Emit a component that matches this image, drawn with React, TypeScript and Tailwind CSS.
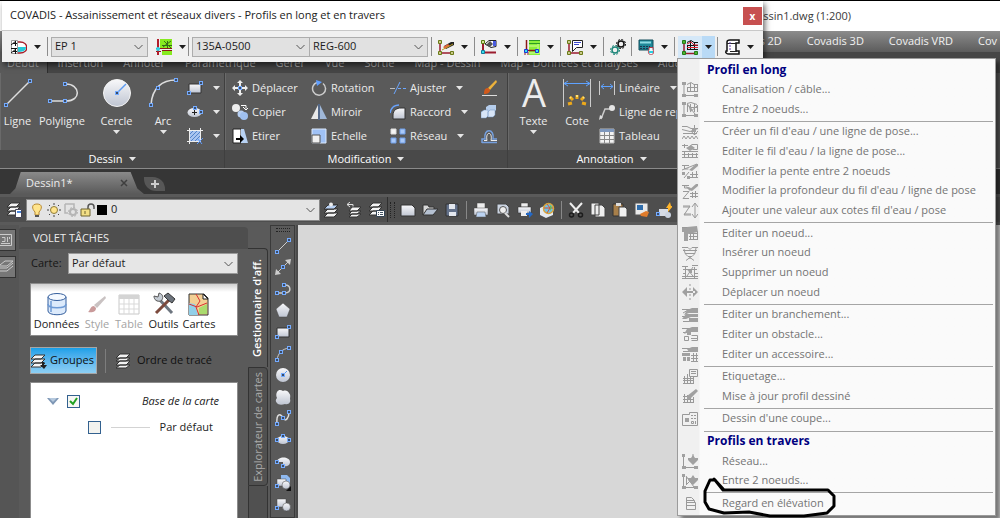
import type { ReactNode } from "react";

type MenuEntry =
  | { kind: "title"; label: string }
  | { kind: "separator" }
  | { kind: "item"; label: string; lines: string; solid?: string };

const RIBBON_TABS = ["Début", "Insertion", "Annoter", "Paramétrique", "Gérer", "Vue", "Sortie", "Map - Dessin", "Map - Données et analyses", "Aide"];

const MENU: MenuEntry[] = [
  { kind: "title", label: "Profil en long" },
  { kind: "item", label: "Canalisation / câble...", lines: "M2 2v12M2 14.500h12M5 3.500l4-2 3 2h4M5.500 6.500h10M5.500 10.500h10M5.500 6v5M8.500 2v9M12.500 3v8M15.500 4v7", solid: "M0 1h4v3h-4zM0 13h4v3h-4zM12 13h4v3h-4z" },
  { kind: "item", label: "Entre 2 noeuds...", lines: "M2 2v12M2 14.500h12M5 2.500l4-1 6 2M7 6.500h9M5 3l8 10M8.500 3v7M12.500 3v8M15.500 4v7M8 11l7-6M5.500 3v8", solid: "M0 1h4v3h-4zM0 13h4v3h-4zM12 13h4v3h-4zM6 3l2 7 2-2z" },
  { kind: "separator" },
  { kind: "item", label: "Créer un fil d'eau / une ligne de pose...", lines: "M0 2.500h5l4 2h7M0 5.500l8 2 8-3M1 9.500h14M12.500 1v10M9 7l3.500 4L16 7M0 15l2-3 2 3 2-3 2 3 2-3 2 3 2-3 2 3", solid: "M10 4h4v4h-4z" },
  { kind: "item", label: "Editer le fil d'eau / la ligne de pose...", lines: "M0 2.500h6M2.500 1v4M7 4l3-2.500h5.500v5h-5M0 8.500h16M2.500 8v6M6.500 10v4M10.500 10v4M14.500 10v4M0 14.500h16M0 11.500h16", solid: "M4 5l5-3 4 3-5 3z" },
  { kind: "item", label: "Modifier la pente entre 2 noeuds", lines: "M0 2.500h7M2.500 2v4h4M0 7l15-6M2 15l5-6M10.500 9v6M14.500 8v7M8 11.500h8M8 14.500h8", solid: "M7 7l7-6h2v2l-6 5zM0 9h3v3h-3zM5 13h3v3h-3z" },
  { kind: "item", label: "Modifier la profondeur du fil d'eau / ligne de pose", lines: "M0 2.500h7M2.500 2v3h5M1 8.500h6l-6 7h6M10.500 9v6M13.500 8v7M8 10.500h8M8 13.500h8", solid: "M7 7l7-6h2v2l-6 5zM3 3l6 2-1 3z" },
  { kind: "item", label: "Ajouter une valeur aux cotes fil d'eau / pose", lines: "M1 4h7l-6 9h7M1 5h7M2 12h7M13 2v13M10 5l3-4 3 4M10 12l3 4 3-4" },
  { kind: "separator" },
  { kind: "item", label: "Editer un noeud...", lines: "M0 2.500h7M7 8.500h9M7 11.500h9M7 14.500h9M8.500 6v9M11.500 8v7M15.500 6v9", solid: "M0 3h6v13h-4v-9h-2zM5 2l10-1 1 6-10 2z" },
  { kind: "item", label: "Insérer un noeud", lines: "M0 2.500h6l2 2 2-2h6M1 5.500h14M3 8.500h10l-3 3H6zM8 11v3M4 15.500l4-3 4 3M2 4l1 4M14 3l-1 5" },
  { kind: "item", label: "Supprimer un noeud", lines: "M0 2.500h6M10 1.500h6M1 5.500h14M3.500 3v11M12.500 3v11M5 5l6 7M11 3l-6 9M1 9.500h3M12 9.500h4M0 14.500h16M0 12.500h16", solid: "M7 6h3v3h-3z" },
  { kind: "item", label: "Déplacer un noeud", lines: "M8 0v2M8 4v2M8 10v2M8 14v2", solid: "M0 8l5-5v10zM16 8l-5-5v10zM3 7h10v2h-10z" },
  { kind: "separator" },
  { kind: "item", label: "Editer un branchement...", lines: "M0 2.500h8M1 6l5-3M0 9.500h8M1 14.500h14", solid: "M5 3l5-2h6v5h-9l-5 2zM4 7h12v3h-7l-5 2h-4zM7 11h9v4h-9z" },
  { kind: "item", label: "Editer un obstacle...", lines: "M0 2.500h8M1 6.500h6M2.500 10.500h4v4h-4zM9.500 9.500h6v5h-6M9 12.500h6", solid: "M5 3l5-2h6v5h-9l-5 2zM5 6h4v3h-4z" },
  { kind: "item", label: "Editer un accessoire...", lines: "M0 2.500h8M1 5.500h7M9 9.500h7M9 12.500h7M9 15.500h7M11.500 7v8M14.500 7v8", solid: "M5 3l5-2h6v5h-9zM0 7h8v3h-8zM1 11h3v4h-3zM5 11h3v4h-3z" },
  { kind: "separator" },
  { kind: "item", label: "Etiquetage...", lines: "M7.500 1.500h8v7h-8zM9 3.500h5M9 5.500h5M1 10.500h11M1 12.500h11M2.500 8v7M5.500 6v9M8.500 9v6M11.500 9v6M1 15.500h11" },
  { kind: "item", label: "Mise à jour profil dessiné", lines: "M1 8.500h5M1 11.500h10M1 14.500h11M2.500 6v9M5.500 7v8M8.500 10v5M11.500 9v6", solid: "M5 8l9-7 2 2-8 8-3 1z" },
  { kind: "separator" },
  { kind: "item", label: "Dessin d'une coupe...", lines: "M.5 3.500h7v-2h8v13h-15zM9 4.500h2M12 4.500h2M9 7.500h2M12 7.500h2M9.500 10.500h2v2h-2zM13.500 10v3", solid: "M3 7h4v4h-4z" },
  { kind: "separator" },
  { kind: "title", label: "Profils en travers" },
  { kind: "item", label: "Réseau...", lines: "M1.500 2v12M2 14.500h12M11 1v6", solid: "M0 1h3v3h-3zM0 13h4v3h-4zM12 13h4v3h-4zM6 5h3l2-3 2 3h3v2l-5 5-5-5z" },
  { kind: "item", label: "Entre 2 noeuds...", lines: "M1.500 2v12M2 14.500h12M4 3l8 11M4.500 4v7M4 12l6-6", solid: "M0 1h3v3h-3zM0 13h4v3h-4zM12 13h4v3h-4zM6 5h3l2-3 2 3h3v2l-5 5-5-5z" },
  { kind: "separator" },
  { kind: "item", label: "Regard en élévation", lines: "M4.500 5.500v-3h5l3 3v2M4.500 7.500h9v7h-9zM4.500 5v9M4 10.500h9M4 5.500h8" },
];

function Svg({ size = 16, children }: { size?: number; children: ReactNode }) {
  return (
    <svg width={size} height={size} viewBox={`0 0 ${size} ${size}`} fill="none" className="shrink-0" aria-hidden="true">
      {children}
    </svg>
  );
}

// Blue square grip drawn on the ends of editable shapes
function Grip({ x, y }: { x: number; y: number }) {
  return <rect x={x - 1.5} y={y - 1.5} width="3" height="3" fill="#3c4c66" stroke="#74abff" />;
}

function Caret({ className = "text-[#e6e6e6]" }: { className?: string }) {
  return (
    <svg width="7" height="4" viewBox="0 0 7 4" className={`shrink-0 ${className}`} aria-hidden="true">
      <path d="M0 0h7L3.500 4z" fill="currentColor" />
    </svg>
  );
}

function Combo({ label, value, className }: { label: string; value: string; className: string }) {
  return (
    <div className={`relative text-[#1c1c1c] ${className}`}>
      <select aria-label={label} className="h-full w-full appearance-none bg-transparent pr-5 pl-[3px] outline-none">
        <option>{value}</option>
      </select>
      <svg width="9" height="5" viewBox="0 0 9 5" fill="none" className="pointer-events-none absolute top-1/2 right-1 -translate-y-1/2" aria-hidden="true">
        <path d="M.5.5l4 4 4-4" stroke="#555" />
      </svg>
    </div>
  );
}

/* ---------- floating COVADIS toolbar ---------- */

function Separator() {
  return <div className="h-[19px] w-px shrink-0 bg-[#8c8c8c]" />;
}

function Tool({ label, active, className = "w-[42px]", children }: { label: string; active?: boolean; className?: string; children: ReactNode }) {
  return (
    <button type="button" aria-label={label} className={`flex h-[22px] shrink-0 items-center ${className}`}>
      <span className={`flex h-full items-center pr-1 pl-1 ${active ? "ml-[3px] bg-[#d5e8f8]" : "ml-0.5"}`}>
        <Svg>{children}</Svg>
      </span>
      <span className={`flex h-full items-center px-[3px] ${active ? "bg-[#b9daf6]" : ""}`}>
        <Caret className="text-[#1e1e1e]" />
      </span>
    </button>
  );
}

function Ends() {
  return (
    <>
      <path d="M2 2v12h12" stroke="#9b1c2e" strokeWidth="1.500" />
      <path d="M.5 1.500h3v3h-3zM.5 12.500h3v3h-3zM12.500 12.500h3v3h-3z" fill="#c9c98a" stroke="#6b7a18" />
    </>
  );
}

function CovadisWindow() {
  return (
    <section className="absolute top-px left-[2px] h-[61px] w-[761px] bg-white shadow-[2px_3px_6px_rgba(0,0,0,0.6)]">
      <header className="flex h-[30px] items-center justify-between border-b border-[#c8c8c8] pr-px pl-2">
        <h1 className="text-[11px] text-[#222]">COVADIS - Assainissement et réseaux divers - Profils en long et en travers</h1>
        <button type="button" aria-label="Fermer" className="flex h-[18px] w-[19px] items-center justify-center bg-[#c75050] text-[10px] leading-none font-bold text-white">
          x
        </button>
      </header>
      <div className="flex h-[31px] items-center bg-[#f0f0f0]">
        <Tool label="Assainissement" className="w-[45px] pl-[3px]">
          <path d="M5 3h4c9 0 9 11 0 11H5z" fill="#fff" stroke="#a81c28" strokeWidth="1.500" />
          <path d="M6 8h9c0 4-3 5-9 5z" fill="#25c9d8" />
          <path d="M.5 1.500h6v13h-6z" fill="#fff" stroke="#999" />
          <path d="M0 6l5-4M2 4.500h4M4.500 2v5M0 9.500h6M0 14l5-4M2 12.500h4M4.500 10v5" stroke="#111" />
        </Tool>
        <Separator />
        <Combo label="Réseau" value="EP 1" className="mr-0.5 ml-[3px] h-5 w-[97px] border border-[#adadad] bg-[#e1e1e1] text-[11px]" />
        <Tool label="Tronçon" className="w-[38px]">
          <path d="M4 0h12v9H4zM6 12h10v4H6z" fill="#86ea1f" />
          <path d="M0 9.500h16M0 12.500h5M6 11.500h10" stroke="#8c1818" />
          <path d="M2 0v16" stroke="#b11d2b" strokeWidth="2" />
          <path d="M6 6.500h10M11.500 2v7M8 2l7 7M15 2L7 8" stroke="#356b18" />
          <circle cx="2" cy="10" r="2" fill="#29d4e8" />
        </Tool>
        <Separator />
        <Combo label="Canalisation" value="135A-0500" className="ml-[3px] h-5 w-[118px] border border-[#adadad] bg-[#e1e1e1] text-[11px]" />
        <Combo label="Regard" value="REG-600" className="mr-[3px] h-5 w-[118px] border border-l-0 border-[#adadad] bg-[#e1e1e1] text-[11px]" />
        <Separator />
        <Tool label="Dessiner">
          <Ends />
          <path d="M6 7l7-4h3v3l-8 4z" fill="#222" />
          <path d="M5 8l5-3 2 2-5 3z" fill="#e3643a" />
          <path d="M4 11l11-6" stroke="#b79b22" />
        </Tool>
        <Separator />
        <Tool label="Editer">
          <path d="M2 2v11M3 13.500h12" stroke="#9b1c2e" strokeWidth="2" />
          <path d="M.5 1.500h3v3h-3z" fill="#d7e39a" stroke="#567a10" />
          <path d="M4 5l4-3.500h7v6l-5 1z" fill="#fff" stroke="#222" />
          <path d="M5 6l4-4 3 3-3 3z" fill="#555" />
          <path d="M12 2h3v5h-3z" fill="#4a5ce0" />
          <path d="M.5 11.500h3v3h-3z" fill="#35dbe8" stroke="#157a9b" />
        </Tool>
        <Separator />
        <Tool label="Profil">
          <path d="M5 1h11v15H5z" fill="#8bf03a" />
          <path d="M5 1.500h11M5 4.500h11" stroke="#2d9b25" />
          <path d="M5 7h8M5 14h11M14 5v10" stroke="#d6fb9e" />
          <path d="M2.500 1v12M2 11.500h10" stroke="#8c1818" strokeWidth="1.500" />
          <path d="M1 13v3M4 13v3" stroke="#8c1818" />
          <path d="M.5 10.500h3v3h-3zM11.500 10.500h3v3h-3z" fill="#34e1ef" stroke="#1838d6" />
        </Tool>
        <Separator />
        <Tool label="Etiquetage">
          <Ends />
          <path d="M5.500 1.500h10v7h-6l-4 4z" fill="#fff" stroke="#222" />
          <path d="M7 3.500h7M7 5.500h5" stroke="#3c49cc" />
        </Tool>
        <Separator />
        <button type="button" aria-label="Paramètres" className="flex w-[27px] justify-center">
          <Svg>
            <circle cx="11" cy="5" r="3" stroke="#111" strokeWidth="1.500" />
            <circle cx="11" cy="5" r="4.500" stroke="#111" strokeDasharray="2 1.500" />
            <circle cx="5" cy="11" r="3" stroke="#1b8578" strokeWidth="1.500" />
            <circle cx="5" cy="11" r="4.500" stroke="#1b8578" strokeDasharray="2 1.500" />
          </Svg>
        </button>
        <Separator />
        <Tool label="Calculs">
          <path d="M1 1h14v10H1z" fill="#1f8798" stroke="#124c5a" />
          <path d="M2 3.500h11" stroke="#8fdbe4" strokeWidth="2" />
          <path d="M2 7.500h10M2 9.500h8" stroke="#1d3550" strokeDasharray="2 1" />
          <path d="M11 8.500h4v2c3 7-7 7-4 0z" fill="#eafcff" stroke="#b33a4a" />
          <path d="M11 13h4" stroke="#27cfe2" strokeWidth="2" />
        </Tool>
        <Separator />
        <Tool label="Profils en long et en travers" active>
          <path d="M2 2v12M2 14.500h12" stroke="#9b1c2e" strokeWidth="1.500" />
          <path d="M5 3.500l4-2 3 2h4M5 6.500h11M5 10.500h11M8.500 2v9M12.500 3v8M5.500 6v5" stroke="#111" />
          <path d="M5 5l4-2 3 3h4M5 8.500h11" stroke="#e01e2e" />
          <path d="M.5 1.500h3v3h-3zM.5 12.500h3v3h-3zM12.500 12.500h3v3h-3z" fill="#4db232" stroke="#237a17" />
        </Tool>
        <Separator />
        <Tool label="Documents" className="w-[40px]">
          <path d="M3 3c0-2 2-2 3-2h9v3h-3v8h3v3H5c-2 0-4-1-3-3h1z" fill="#fff" stroke="#111" strokeWidth="1.500" />
          <path d="M3 4.500h9M6 12.500h7" stroke="#222" />
          <path d="M6 3v9" stroke="#5f3ca8" strokeDasharray="2 1" />
        </Tool>
      </div>
    </section>
  );
}

/* ---------- drop-down menu ---------- */

function ProfilMenu() {
  return (
    <nav aria-label="Profils" className="absolute top-[58px] right-1 bottom-0.5 flex w-[319px] flex-col border border-[#9b9b9b] bg-[#fafafa] bg-linear-to-r from-[#f0f0f0] from-[21px] to-[#fafafa] to-[22px] pt-px pb-0.5 shadow-[4px_4px_4px_rgba(0,0,0,0.45)]">
      {MENU.map((entry, index) => {
        if (entry.kind === "separator") {
          return <div key={index} className="mr-0.5 ml-[26px] h-[3px] border-b border-[#a5a5a5]" />;
        }
        if (entry.kind === "title") {
          return (
            <h2 key={index} className="flex min-h-0 flex-1 items-center pl-[29px] text-[12px] font-bold text-[#000080]">
              {entry.label}
            </h2>
          );
        }
        return (
          <button key={index} type="button" className="flex min-h-0 flex-1 items-center gap-6 pl-1 text-left text-[11px] text-[#747474]">
            <Svg>
              <path d={entry.lines} stroke="#999" />
              {entry.solid && <path d={entry.solid} fill="#a0a0a0" />}
            </Svg>
            {entry.label}
          </button>
        );
      })}
    </nav>
  );
}

/* ---------- ribbon ---------- */

function BigTool({ label, caret, className, children }: { label: string; caret?: boolean; className: string; children: ReactNode }) {
  return (
    <button type="button" className={`flex shrink-0 flex-col items-center ${className}`}>
      <Svg size={32}>{children}</Svg>
      <span className="mt-1 h-[18px] leading-[18px] whitespace-nowrap">{label}</span>
      {caret && <Caret />}
    </button>
  );
}

function SmallTool({ label, caret, name, children }: { label?: string; caret?: boolean; name?: string; children: ReactNode }) {
  return (
    <button type="button" aria-label={label ?? name} className="flex h-6 items-center whitespace-nowrap">
      <Svg>{children}</Svg>
      {label && <span className="ml-1">{label}</span>}
      {caret && (
        <span className="ml-2.5">
          <Caret />
        </span>
      )}
    </button>
  );
}

function Panel({ title, className, children }: { title: string; className: string; children: ReactNode }) {
  return (
    <section className={`flex shrink-0 flex-col border-r border-[#3f3f3f] ${className}`}>
      <div className="flex h-[77px] items-start border-l border-[#6a6a6a] pt-[3px]">{children}</div>
      <h2 className="flex h-[18px] items-center justify-center gap-1.5 bg-[#494949] text-white">
        {title}
        <Caret />
      </h2>
    </section>
  );
}

function Ribbon() {
  return (
    <div className="flex h-24 shrink-0 overflow-hidden border-b border-[#8a8a8a] bg-[#5a5a5a] text-[11px] text-[#ececec]">
      <Panel title="Dessin" className="w-[225px]">
        <BigTool label="Ligne" className="w-[33px]">
          <path d="M4 29L28 5" stroke="#ddd" strokeWidth="1.500" />
          <Grip x={4} y={29} />
          <Grip x={28} y={5} />
        </BigTool>
        <BigTool label="Polyligne" className="w-14">
          <path d="M4 25h16c16 0 14-17 0-17" stroke="#ddd" strokeWidth="1.500" />
          <Grip x={4} y={25} />
          <Grip x={19} y={25} />
          <Grip x={19} y={8} />
        </BigTool>
        <BigTool label="Cercle" caret className="w-[53px]">
          <circle cx="16" cy="17" r="13.500" fill="url(#ball)" stroke="#f4f4f4" />
          <path d="M16 17l9-9" stroke="#5c9af0" strokeWidth="1.500" />
          <Grip x={16} y={17} />
        </BigTool>
        <BigTool label="Arc" caret className="w-10">
          <path d="M4 29C5 12 15 4 29 4" stroke="#ddd" strokeWidth="1.500" />
          <Grip x={4} y={29} />
          <Grip x={11} y={12} />
          <Grip x={29} y={4} />
        </BigTool>
        <div className="ml-1">
          <SmallTool name="Rectangle" caret>
            <path d="M2 4h12v9h-12z" fill="url(#ball)" stroke="#333" />
            <Grip x={2} y={13} />
            <Grip x={14} y={3} />
          </SmallTool>
          <SmallTool name="Ellipse" caret>
            <ellipse cx="7.500" cy="8.500" rx="7" ry="4.500" fill="url(#ball)" />
            <path d="M5 8.500h5M7.500 6v5" stroke="#222" />
            <Grip x={8} y={4} />
            <Grip x={14} y={8} />
          </SmallTool>
          <SmallTool name="Hachures" caret>
            <path d="M3 3h10v10h-10z" fill="#a9c4ef" />
            <path d="M3 6l3-3M3 10l7-7M4 13l9-9M8 13l5-5" stroke="#5383c9" />
            <path d="M0 2.500h16M2.500 0v16M13.500 0v14M0 13.500h14" stroke="#eee" />
            <path d="M10 16l6-6M11 11l4 5" stroke="#5d9bff" />
          </SmallTool>
        </div>
      </Panel>

      <Panel title="Modification" className="w-[283px]">
        <div className="ml-1.5 w-[79px]">
          <SmallTool label="Déplacer">
            <path d="M8 0l3 3H9v3H7V3H5zM8 16l3-3H9v-3H7v3H5zM0 8l3-3v2h3v2H3v2zM16 8l-3-3v2h-3v2h3v2z" fill="#eee" />
            <Grip x={8} y={8} />
          </SmallTool>
          <SmallTool label="Copier">
            <circle cx="4" cy="4" r="4" fill="#eee" />
            <circle cx="9" cy="10" r="3.500" fill="#b7cff2" />
            <circle cx="12" cy="12" r="4" fill="#9fc0f0" />
            <path d="M9 1.500h5v3M11 3l3 3 2-2" stroke="#fff" />
          </SmallTool>
          <SmallTool label="Etirer">
            <path d="M1 1h8v14H1z" fill="#fff" stroke="#222" />
            <path d="M9 1h3l4 14H9z" fill="#b8d2f3" />
            <path d="M4 11h6" stroke="#000" strokeWidth="2" />
            <path d="M8 7l4 4-4 4z" fill="#000" />
          </SmallTool>
        </div>
        <div className="w-[79px]">
          <SmallTool label="Rotation">
            <path d="M6 2.500a6.500 6.500 0 1 0 6 1" stroke="#ccc" strokeWidth="1.500" />
            <path d="M5 0l6 2-5 4z" fill="#5e9dff" />
          </SmallTool>
          <SmallTool label="Miroir">
            <path d="M7 1v14H0z" fill="#e8e8e8" />
            <path d="M9 1v14h7z" fill="#9fb7d8" />
            <path d="M8 0v16" stroke="#4e79b9" />
          </SmallTool>
          <SmallTool label="Echelle">
            <path d="M1 1h14v14h-14z" fill="#9fc1f5" stroke="#dbe8fb" />
            <path d="M1 7h8v8h-8z" fill="#f0f0f0" stroke="#555" />
          </SmallTool>
        </div>
        <div className="w-[91px]">
          <SmallTool label="Ajuster" caret>
            <path d="M0 8.500h5" stroke="#bbb" />
            <path d="M8 8.500h3M13 8.500h3" stroke="#6ca7ff" />
            <path d="M4 14l6-12" stroke="#6ca7ff" />
          </SmallTool>
          <SmallTool label="Raccord" caret>
            <path d="M3 15V11C3 6 7 4 11 4h4v11z" fill="url(#ball)" stroke="#333" />
            <path d="M0 9c1-5 4-8 9-8" stroke="#69a2fa" strokeWidth="1.500" />
          </SmallTool>
          <SmallTool label="Réseau" caret>
            <path d="M1 1h5v5h-5z" fill="#f5f5f5" stroke="#ddd" />
            <path d="M10 1h5v5h-5zM1 10h5v5h-5zM10 10h5v5h-5z" fill="#a9c8f7" stroke="#6f9ee8" />
          </SmallTool>
        </div>
        <div>
          <SmallTool name="Effacer">
            <path d="M1 15.500h15" stroke="#ddd" />
            <path d="M7 8l8-8 1 2-7 8z" fill="#ecb23b" />
            <path d="M3 14c0-4 1-6 4-6l2 2c0 3-3 4-6 4z" fill="#d35a1b" />
          </SmallTool>
          <SmallTool name="Décomposer">
            <path d="M5 3l3-2h7v5l-2 2H5z" fill="#b5cdec" />
            <path d="M0 8l3-2h4v6l-2 2H0zM7 8l2-2h5v5l-2 2H7z" fill="#d8e5f7" stroke="#7194c2" strokeWidth=".5" />
          </SmallTool>
          <SmallTool name="Décaler">
            <path d="M1 15v-4h3C2 0 14 0 12 11h4M1 14.500h15" stroke="#75a0e0" strokeWidth="1.500" />
            <path d="M3 12.500h3C4 3 12 3 10 12.500h6" stroke="#eee" />
          </SmallTool>
        </div>
      </Panel>

      <Panel title="Annotation" className="w-[208px]">
        <BigTool label="Texte" caret className="w-[49px]">
          <text x="16" y="31" textAnchor="middle" fontSize="38" fill="#ededed">
            A
          </text>
        </BigTool>
        <BigTool label="Cote" className="w-[38px]">
          <path d="M2.500 3v28M29.500 3v28" stroke="#ccc" />
          <path d="M3 7.500h26M7 5L3 7.500 7 10M25 5l4 2.500-4 2.500" stroke="#5ea2ff" />
          <path d="M16 19v4M9 21l3 3M23 21l-3 3M7 28l4-1M25 28l-4-1" stroke="#eda91b" strokeWidth="3" />
          <path d="M16 19v2M9 21l1 1M23 21l-1 1" stroke="#ffe47a" strokeWidth="2" />
        </BigTool>
        <div className="ml-[3px]">
          <SmallTool label="Linéaire" caret>
            <path d="M.5 1v14M15.500 1v14" stroke="#ccc" />
            <path d="M2 6.500h12M5 4L2 6.500 5 9M11 4l3 2.500L11 9" stroke="#5ea2ff" />
          </SmallTool>
          <SmallTool label="Ligne de repère">
            <path d="M2 15l4-10h5" stroke="#ccc" strokeWidth="1.500" />
            <circle cx="13" cy="4" r="3" fill="#e5e5e5" />
            <path d="M0 16l1-5 3 2z" fill="#ddd" />
          </SmallTool>
          <SmallTool label="Tableau">
            <path d="M1 1h14v14h-14z" fill="#f2f2f2" stroke="#bbb" />
            <path d="M1 1h14v3h-14z" fill="#7f98bd" />
            <path d="M1 7.500h14M1 11.500h14M5.500 4v11M10.500 4v11" stroke="#888" />
          </SmallTool>
        </div>
      </Panel>
    </div>
  );
}

/* ---------- layer and standard toolbars ---------- */

function IconButton({ label, className = "", children }: { label: string; className?: string; children: ReactNode }) {
  return (
    <button type="button" aria-label={label} className={`shrink-0 ${className}`}>
      <Svg>{children}</Svg>
    </button>
  );
}

function Sheets() {
  return <path d="M5 11h10l-4 4H1zM5 7h10l-4 4H1zM5 3h10l-4 4H1z" fill="#f4f4f4" stroke="#333" />;
}

function Toolbars() {
  return (
    <div className="flex h-7 shrink-0 items-center overflow-hidden border-b-[3px] border-[#5a5a5a] bg-[#4e4e4e] pl-[7px]">
      <IconButton label="Propriétés des calques">
        <path d="M4 9h8l-3 4H0zM4 5h9l-4 4H0zM4 1h9L9 5H0z" fill="#f4f4f4" stroke="#333" />
        <path d="M8.500 7.500h6v8h-6z" fill="#fff" stroke="#445" />
        <path d="M10 10h4" stroke="#4b85d9" strokeWidth="2" />
      </IconButton>
      <div className="ml-[3px] flex h-[22px] w-[294px] items-center gap-px border border-[#888] bg-[#e4e4e4] pl-0.5">
        <Svg>
          <path d="M8 2c-6 0-5 5-2 8v3h4v-3c3-3 4-8-2-8z" fill="#ffe48b" stroke="#b88b35" />
          <path d="M6 14h4" stroke="#555" strokeWidth="2" />
        </Svg>
        <Svg>
          <circle cx="8" cy="8" r="3.500" fill="#ffe48b" stroke="#8f7c37" />
          <path d="M8 1v2M8 13v2M1 8h2M13 8h2M3 3l1 1M12 12l1 1M13 3l-1 1M3 13l1-1" stroke="#444" />
        </Svg>
        <Svg>
          <path d="M2 2h9v4M2 2v9h3" stroke="#b5b5b5" strokeWidth="1.500" />
          <circle cx="10" cy="10" r="3" stroke="#b5b5b5" strokeWidth="2" />
          <circle cx="10" cy="10" r="4.500" stroke="#b5b5b5" strokeDasharray="2 1.500" />
        </Svg>
        <Svg>
          <path d="M8 8V5c0-4 6-4 6 0v2" stroke="#555" strokeWidth="1.500" />
          <path d="M1 7h9v7h-9z" fill="#f3df85" stroke="#6e6431" />
          <path d="M5 9v3" stroke="#6e6431" />
        </Svg>
        <span className="size-2.5 shrink-0 bg-black" />
        <Combo label="Calque" value="0" className="h-full flex-1 text-[11px]" />
      </div>
      <div className="flex items-center gap-[7px] pl-[3px]">
        <IconButton label="Rendre courant">
          <Sheets />
          <path d="M5 3h10l-4 4H1z" fill="#b7d0f3" stroke="#333" />
          <circle cx="8" cy="2.500" r="2" fill="#eee" />
        </IconButton>
        <IconButton label="Calque précédent">
          <path d="M6 12h9l-4 3H3zM6 9h9l-4 3H3zM6 5h9l-4 4H3z" fill="#f4f4f4" stroke="#333" />
          <path d="M1 2.500h6v2M4 0L1 2.500 4 5" stroke="#ddd" />
        </IconButton>
        <IconButton label="Etat des calques">
          <path d="M4 9h8l-3 4H0zM4 5h9l-4 4H0zM4 1h9L9 5H0z" fill="#f4f4f4" stroke="#333" />
          <path d="M7.500 8.500h8v6h-8z" fill="#fff" stroke="#345" />
          <path d="M9 10.500h1M11 10.500h3M9 12.500h1M11 12.500h3" stroke="#456" />
        </IconButton>
      </div>
      <div className="mx-0.5 h-full w-px bg-[#2f2f2f]" />
      <div className="h-4 w-[5px] shrink-0 border-x border-dotted border-[#222]" />
      <div className="flex items-center gap-1.5 pl-[5px]">
        <IconButton label="Nouveau">
          <path d="M1 3h11l3 3v8h-14z" fill="url(#ball)" stroke="#333" />
        </IconButton>
        <IconButton label="Ouvrir">
          <path d="M1 13V3h5l1 2h5v3" fill="#d7d7d7" stroke="#333" />
          <path d="M1 13l4-6h11l-5 6z" fill="#b5c1d2" stroke="#333" />
        </IconButton>
        <IconButton label="Enregistrer">
          <path d="M2 2h12v12h-12z" fill="#63718a" stroke="#333" />
          <path d="M5 2h6v5h-6zM5 10h7v4h-7z" fill="#e3e7ee" />
        </IconButton>
        <div className="h-[18px] w-px bg-[#888]" />
        <IconButton label="Imprimer">
          <path d="M4 1h8v6H4z" fill="#eee" stroke="#444" strokeWidth=".5" />
          <path d="M1 6h14v7h-14z" fill="url(#ball)" stroke="#444" strokeWidth=".5" />
          <path d="M4 10h8l1 5H3z" fill="#bcd3f2" stroke="#555" strokeWidth=".5" />
        </IconButton>
        <IconButton label="Aperçu">
          <path d="M2 2h9l3 3v7H2z" fill="#cbd4e2" stroke="#444" />
          <circle cx="8" cy="8" r="3.500" fill="#eee" stroke="#555" />
          <path d="M10 11l4 4" stroke="#ddd" strokeWidth="2" />
        </IconButton>
        <IconButton label="Publier">
          <path d="M4 1h7v4h-7z" fill="#eee" stroke="#333" strokeWidth=".5" />
          <path d="M1 5h13v6h-13z" fill="url(#ball)" stroke="#333" strokeWidth=".5" />
          <path d="M4 9h6v5h-6z" fill="#eee" />
          <path d="M9 12h4" stroke="#2369c7" strokeWidth="2" />
          <path d="M12 9l4 3-4 4z" fill="#2369c7" />
        </IconButton>
        <IconButton label="Cartographie">
          <path d="M1 6l6-3 7 3v7l-7 3-6-3z" fill="#e5eaf0" />
          <circle cx="9.500" cy="6.500" r="5" fill="#6ec1e8" stroke="#d8a43c" strokeWidth="1.500" />
          <path d="M8 2l3 4-3 5M5 6h9" stroke="#d9532c" />
          <path d="M11 3l2 2-2 4z" fill="#67ba55" />
        </IconButton>
        <div className="h-[18px] w-px bg-[#888]" />
        <IconButton label="Couper">
          <path d="M2 1l9 10M14 1L5 11" stroke="#eee" strokeWidth="2" />
          <circle cx="3.500" cy="13" r="2" stroke="#1c1c1c" strokeWidth="1.500" />
          <circle cx="12.500" cy="13" r="2" stroke="#1c1c1c" strokeWidth="1.500" />
        </IconButton>
        <IconButton label="Copier">
          <path d="M1 1h8v12h-8zM5 3h7l3 3v9h-10z" fill="#eee" stroke="#444" />
        </IconButton>
        <IconButton label="Coller">
          <path d="M1 2h10v12h-10z" fill="#a77f4a" stroke="#333" />
          <path d="M4 1h5v3h-5z" fill="#ddd" />
          <path d="M7 5h6l2 2v8h-8z" fill="#f0f0f0" stroke="#444" />
        </IconButton>
        <IconButton label="Copier les propriétés">
          <path d="M1 1h13v12h-13z" fill="#e9e9e9" stroke="#555" />
          <path d="M3 3h6v5h-6z" fill="#2f6dac" />
          <path d="M6 12l6-3 3 1-2 5-6-1z" fill="#df7b2b" />
        </IconButton>
        <IconButton label="Editeur de blocs">
          <path d="M3 7h9v7h-9z" fill="#d7dce5" />
          <circle cx="12" cy="13" r="3" fill="#cbd3e0" />
          <path d="M10 6l4-6 1 4h2l-5 6v-4z" fill="#ffb52b" />
          <Grip x={2} y={12} />
        </IconButton>
      </div>
    </div>
  );
}

/* ---------- task pane ---------- */

function PaneTool({ label, disabled, className, children }: { label: string; disabled?: boolean; className: string; children: ReactNode }) {
  return (
    <button type="button" disabled={disabled} className={`flex shrink-0 flex-col items-center text-[11px] text-[#1c1c1c] disabled:text-[#a3a3a3] ${className}`}>
      <Svg size={24}>{children}</Svg>
      {label}
    </button>
  );
}

function TaskPane() {
  return (
    <div className="flex w-[229px] shrink-0 flex-col pt-0.5">
      <h2 className="flex h-[22px] shrink-0 items-center rounded-t bg-[#4e4e4e] pl-3.5 text-[11px] text-[#ececec]">VOLET TÂCHES</h2>
      <div className="flex min-h-0 flex-1 flex-col pr-2.5 pl-[11px]">
        <label className="mt-1 flex h-[21px] shrink-0 items-center text-[11px] text-[#161616]">
          <span className="w-[38px] shrink-0 pl-px">Carte:</span>
          <Combo label="Carte" value="Par défaut" className="h-full flex-1 border border-[#999] bg-[#e6e6e6] text-[11px]" />
        </label>
        <div className="mt-[9px] flex h-[53px] shrink-0 items-start border border-[#8c8c8c] bg-white bg-linear-to-b from-[#d0d0d0] to-white to-[8px] pt-2">
          <PaneTool label="Données" className="w-[51px]">
            <path d="M3 5v14c0 5 18 5 18 0V5" fill="#dceafb" stroke="#355f9d" />
            <path d="M3 12c0 5 18 5 18 0M6 9v11" stroke="#6d9ad5" strokeWidth="1.500" />
            <ellipse cx="12" cy="5" rx="9" ry="3.500" fill="#f4f9ff" stroke="#355f9d" />
          </PaneTool>
          <PaneTool label="Style" disabled className="w-[30px]">
            <path d="M9 13L20 4l1 2-9 10z" fill="#c9c2c2" />
            <path d="M3 20c2-1 2-6 6-6l2 2c0 4-4 5-8 4z" fill="#c99a9a" />
          </PaneTool>
          <PaneTool label="Table" disabled className="w-[34px]">
            <path d="M2 3h20v19h-20z" fill="#fff" stroke="#c8c8c8" />
            <path d="M2 3h20v4h-20z" fill="#d4d4d4" />
            <path d="M2 12h20M2 17h20M7 7v15M12 7v15M17 7v15" stroke="#d9d9d9" />
          </PaneTool>
          <PaneTool label="Outils" className="w-[35px]">
            <path d="M6 6l14 15" stroke="#6d757f" strokeWidth="3" />
            <path d="M2 4l4 1 1-4c4 1 5 5 2 8-4 1-7-1-7-5z" fill="#c4cbd3" stroke="#555" />
            <path d="M17 8L4 21" stroke="#7c4a3d" strokeWidth="3" />
            <path d="M12 4l4-3 7 6-3 4-4-3z" fill="#6d747d" stroke="#333" />
          </PaneTool>
          <PaneTool label="Cartes" className="w-9">
            <path d="M2 2h15l4 4v17H2z" fill="#f3cf94" stroke="#333" />
            <path d="M2 11l6 1 3 11H2z" fill="#92cfe8" />
            <path d="M12 16l8-4v10h-8z" fill="#aadb6d" />
            <path d="M2 12l8 3 10-4M9 2l4 7-4 6 3 8" stroke="#d92f2f" />
            <path d="M16 2l5 5h-5z" fill="#fff" stroke="#222" />
          </PaneTool>
        </div>
        <div className="mt-[11px] flex h-[27px] shrink-0 items-center text-[11px] text-[#101010]">
          <button type="button" className="flex h-full w-[67px] items-center justify-between border border-[#a6a6a6] bg-linear-to-b from-[#17a0e8] to-[#8ccff4] pr-0.5">
            <Svg>
              <path d="M4 10h10l-4 4H0zM4 6h10l-4 4H0zM4 2h10l-4 4H0z" fill="#f4f4f4" stroke="#333" />
              <path d="M12 9v3" stroke="#222" strokeWidth="2" />
              <path d="M9 12h7l-3 4z" fill="#222" />
            </Svg>
            Groupes
          </button>
          <div className="ml-2 h-6 w-px bg-[#7d7d7d]" />
          <button type="button" className="ml-[9px] flex items-center gap-1.5">
            <Svg>
              <path d="M5 12h10l-4 3H1zM5 8h10l-4 4H1zM5 5h10l-4 3H1zM5 1h10l-4 4H1z" fill="#f2f2f2" stroke="#333" />
            </Svg>
            Ordre de tracé
          </button>
        </div>
        <div className="mt-2 flex-1 border border-b-0 border-[#8c8c8c] bg-white pt-[5px] text-[11px] text-[#1c1c1c]">
          <label className="flex h-[26px] items-center pl-4">
            <svg width="12" height="8" viewBox="0 0 12 8" aria-hidden="true">
              <path d="M0 1h12L6 8z" fill="#7e97b5" />
              <path d="M2 1h8L6 5z" fill="#b6c9de" />
            </svg>
            <span className="relative ml-2 size-[13px]">
              <input type="checkbox" defaultChecked className="peer block size-[13px] appearance-none border border-[#33618f] bg-[#f7f7f4]" />
              <svg width="13" height="13" viewBox="0 0 13 13" fill="none" className="pointer-events-none absolute inset-0 hidden peer-checked:block" aria-hidden="true">
                <path d="M3 6l3 3 4-6" stroke="#21a121" strokeWidth="2" />
              </svg>
            </span>
            <span className="ml-auto pr-[18px] italic">Base de la carte</span>
          </label>
          <label className="flex h-[26px] items-center pl-[57px]">
            <input type="checkbox" className="size-[13px] appearance-none border border-[#33618f] bg-[#f3f3ef]" />
            <span className="mx-2.5 h-px flex-1 bg-[#d3d3d3]" />
            <span className="pr-6">Par défaut</span>
          </label>
        </div>
      </div>
    </div>
  );
}

function DrawToolbar() {
  return (
    <div className="flex w-[25px] shrink-0 flex-col items-center justify-between overflow-hidden border border-[#3a3a3a] bg-[#5a5a5a] pt-0.5 pb-1">
      <div className="h-1 w-3.5 shrink-0 border-y border-dotted border-[#222]" />
      <IconButton label="Ligne">
        <path d="M2 14L14 2" stroke="#ccc" />
        <Grip x={2} y={14} />
        <Grip x={14} y={2} />
      </IconButton>
      <IconButton label="Droite">
        <path d="M3 13L13 3" stroke="#ccc" />
        <path d="M16 0l-1 6-5-5zM0 16l1-6 5 5z" fill="#ccc" />
        <Grip x={8} y={8} />
      </IconButton>
      <IconButton label="Polyligne">
        <path d="M2 12h8c7 0 6-8 0-8" stroke="#ccc" strokeWidth="1.500" />
        <Grip x={2} y={12} />
        <Grip x={9} y={12} />
        <Grip x={9} y={4} />
      </IconButton>
      <IconButton label="Polygone">
        <path d="M8 1l7 6-3 8H4L1 7z" fill="url(#ball)" stroke="#444" strokeWidth=".5" />
      </IconButton>
      <IconButton label="Rectangle">
        <path d="M2 4h12v9H2z" fill="url(#ball)" stroke="#333" />
        <Grip x={2} y={13} />
        <Grip x={14} y={3} />
      </IconButton>
      <IconButton label="Arc">
        <path d="M2 14C3 7 7 3 14 2" stroke="#ccc" />
        <Grip x={2} y={14} />
        <Grip x={6} y={6} />
        <Grip x={14} y={2} />
      </IconButton>
      <IconButton label="Cercle">
        <circle cx="8" cy="8" r="7" fill="url(#ball)" />
        <path d="M8 8l4-4" stroke="#5c9af0" />
        <Grip x={8} y={8} />
      </IconButton>
      <IconButton label="Nuage de révision">
        <path d="M2 3c2-3 4-2 6-1 3-1 5 0 6 2 2 2 1 4 1 6 1 3-1 6-5 5-3 1-7 1-8-1-2-2-1-4 0-5-1-2-1-4 0-6z" fill="url(#ball)" />
      </IconButton>
      <IconButton label="Spline">
        <path d="M2 14C1 2 6 4 8 8c3 5 6-1 6-6" stroke="#ddd" strokeWidth="1.500" />
        <Grip x={2} y={14} />
        <Grip x={8} y={8} />
        <Grip x={14} y={2} />
      </IconButton>
      <IconButton label="Ellipse">
        <ellipse cx="8" cy="8" rx="6" ry="4" fill="url(#ball)" />
        <Grip x={2} y={8} />
        <Grip x={8} y={4} />
        <Grip x={14} y={8} />
      </IconButton>
      <IconButton label="Arc elliptique">
        <path d="M2 8c0-6 13-6 13 0 0 4-4 5-7 4V8z" fill="url(#ball)" />
        <Grip x={2} y={8} />
        <Grip x={8} y={12} />
      </IconButton>
      <IconButton label="Insérer un bloc">
        <path d="M6 0h6l3 3v8h-9z" fill="#8fb9ef" />
        <path d="M2 4h9v7H2z" fill="url(#ball)" stroke="#444" strokeWidth=".5" />
        <circle cx="11" cy="10" r="4" fill="url(#ball)" stroke="#444" strokeWidth=".5" />
        <path d="M16 11v5h-5z" fill="#111" />
        <Grip x={2} y={11} />
      </IconButton>
      <IconButton label="Créer un bloc">
        <path d="M2 2h9v8H2z" fill="url(#ball)" stroke="#444" strokeWidth=".5" />
        <circle cx="11.500" cy="10" r="4" fill="url(#ball)" stroke="#444" strokeWidth=".5" />
        <Grip x={2} y={11} />
      </IconButton>
    </div>
  );
}

export default function App() {
  return (
    <div className="relative flex h-screen flex-col overflow-hidden bg-[#5a5a5a] font-['Open_Sans','Noto_Sans',sans-serif] text-[11px]">
      <svg width="0" height="0" className="absolute" aria-hidden="true">
        <linearGradient id="ball" x1="0" y1="0" x2="0" y2="1">
          <stop offset="0" stopColor="#f8f8fa" />
          <stop offset="1" stopColor="#bfc5d2" />
        </linearGradient>
      </svg>

      <div className="flex h-[31px] shrink-0 items-center justify-end border-t border-black bg-white pr-[149px] text-[11px] whitespace-nowrap text-[#3a3a3a]">ssin1.dwg (1:200)</div>
      <div className="flex h-[21px] shrink-0 items-center justify-end gap-[25px] bg-linear-to-b from-[#8c8c8c] to-[#5c5c5c] pr-[3px] whitespace-nowrap text-[#f2f2f2]">
        <span>s 2D</span>
        <span>Covadis 3D</span>
        <span>Covadis VRD</span>
        <span>Cov</span>
      </div>
      <div className="flex h-[21px] shrink-0 items-center overflow-hidden bg-[#464646] whitespace-nowrap text-[#b5b5b5]">
        {RIBBON_TABS.map((tab, index) => (
          <a key={tab} href="#" className={index === 0 ? "flex h-full items-center border-r border-[#2e2e2e] bg-[#5a5a5a] pt-0.5 pr-2 pl-[7px]" : "px-2.5 pt-0.5"}>
            {tab}
          </a>
        ))}
      </div>
      <Ribbon />

      <div className="flex h-[25px] shrink-0 items-end bg-[#363636] pl-2.5 text-[#ececec]">
        <div className="flex h-[22px] w-[134px] items-center justify-between rounded-t-lg bg-linear-to-b from-[#8a8a8a] to-[#5a5a5a] pr-4 pl-4 [clip-path:polygon(0_100%,4%_75%,8%_0,90%_0,95%_75%,100%_100%)]">
          Dessin1*
          <button type="button" aria-label="Fermer Dessin1">
            <Svg size={8}>
              <path d="M1 1l6 6M7 1L1 7" stroke="#3f3f3f" strokeWidth="1.500" />
            </Svg>
          </button>
        </div>
        <button type="button" aria-label="Nouveau dessin" className="mb-[3px] flex h-3.5 w-[21px] items-center justify-center rounded-tr-xl rounded-bl-xl bg-[#575757]">
          <Svg size={8}>
            <path d="M4 0v8M0 4h8" stroke="#ccc" strokeWidth="2" />
          </Svg>
        </button>
      </div>
      <div className="h-[3px] shrink-0 bg-[#5a5a5a]" />
      <Toolbars />

      <div className="flex min-h-0 flex-1">
        <div className="flex w-[19px] shrink-0 flex-col gap-[5px] bg-[#555] pt-1">
          <button type="button" aria-label="Palette" className="flex h-[22px] w-4 items-center border border-l-0 border-[#333] bg-[#777]">
            <Svg size={14}>
              <path d="M0 1.500h11.500v11H0M2 4.500h3v4H2M7.500 4v5M9.500 4v2M1 10.500h9" stroke="#ccc" />
            </Svg>
          </button>
          <button type="button" aria-label="Calques" className="flex h-[22px] w-4 items-center border border-l-0 border-[#333] bg-[#777]">
            <Svg size={14}>
              <path d="M0 5l5-4h8L7 6H0M0 8h7l6-5M0 11h7l6-5" stroke="#ccc" />
            </Svg>
          </button>
        </div>
        <TaskPane />
        <div className="flex w-5 shrink-0 flex-col pt-[23px] text-[11px]">
          <button type="button" className="flex h-[119px] w-full items-center justify-center rounded-tr border-t border-r border-[#333] text-white">
            <span className="rotate-180 font-semibold whitespace-nowrap [writing-mode:vertical-rl]">Gestionnaire d'aff.</span>
          </button>
          <button type="button" className="flex h-[119px] w-full items-center justify-center rounded-r border border-[#333] bg-[#505050] text-[#aaa]">
            <span className="rotate-180 whitespace-nowrap [writing-mode:vertical-rl]">Explorateur de cartes</span>
          </button>
          <div className="flex-1 border-x border-[#333] bg-[#505050]" />
        </div>
        <div className="flex w-[30px] shrink-0 border-r-2 border-[#4a4a4a] pl-0.5">
          <DrawToolbar />
        </div>
        <div className="flex-1 bg-[#d7d7d7]" />
      </div>

      <CovadisWindow />
      <ProfilMenu />
      {/* hand-drawn loop around "Regard en élévation" */}
      <svg width="136" height="42" viewBox="0 0 136 42" fill="none" className="pointer-events-none absolute right-[161px] bottom-0" aria-hidden="true">
        <path d="M20 14L12 4L7 4L2 15V26L6 33L21 37L46 36L67 40H101L124 37L131 30V20L125 14H21L11 3" stroke="#000" strokeWidth="3" strokeLinejoin="round" strokeLinecap="round" />
      </svg>
    </div>
  );
}
